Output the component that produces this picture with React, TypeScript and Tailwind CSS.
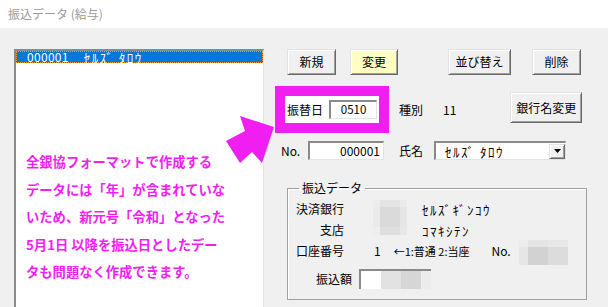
import React from 'react';

const font = "font-['Noto_Sans_CJK_JP',sans-serif]";

const Btn: React.FC<{ label: string; className?: string }> = ({ label, className = '' }) => (
  <div
    className={`flex items-center justify-center border border-t-[#e3e3e3] border-l-[#e3e3e3] border-r-[#696969] border-b-[#696969] shadow-[inset_1px_1px_0_#ffffff,inset_-1px_-1px_0_#a0a0a0] text-[12px] leading-none text-black ${className}`}
  >
    {label}
  </div>
);

const sunken =
  'border-t-2 border-l-2 border-r border-b border-t-[#8a8a8a] border-l-[#8a8a8a] border-r-[#e3e3e3] border-b-[#e3e3e3] bg-white';

// half-width katakana, spaced out the way the old Windows UI font draws them
const kana = 'text-[13px] tracking-[1.5px]';

export default function App() {
  return (
    <div className={`relative w-[608px] h-[307px] overflow-hidden bg-[#f0f0f0] text-black ${font}`}>
      {/* title bar */}
      <div className="h-[28px] bg-white flex items-center pl-[8px] text-[12px] text-[#9a9a9a]">
        振込データ (給与)
      </div>

      <div className="flex pt-[21px]">
        {/* list box */}
        <div className="ml-[14px] w-[250px] h-[270px] bg-white border-t-2 border-l-2 border-r border-t-[#8a8a8a] border-l-[#8a8a8a] border-r-[#e3e3e3] shrink-0">
          <div className="h-[12px] bg-[#0078d7] border border-dotted border-[#e89a3c] flex items-center pl-[10px] text-[12px] leading-none text-white whitespace-nowrap">
            <span className="tracking-[0.3px]">000001</span>
            <span className={`ml-[15px] ${kana}`}>ｾﾙｽﾞ ﾀﾛｳ</span>
          </div>
          <div className="mt-[85px] pl-[10px] text-[13.3px] leading-[27.5px] font-bold text-[#f01ef0] whitespace-nowrap">
            全銀協フォーマットで作成する
            <br />
            データには「年」が含まれていな
            <br />
            いため、新元号「令和」となった
            <br />
            5月1日 以降を振込日としたデー
            <br />
            タも問題なく作成できます。
          </div>
        </div>

        {/* right panel */}
        <div className="ml-[11px] flex flex-col text-[12px]">
          <div className="flex h-[26px]">
            <Btn label="新規" className="ml-[12px] w-[49px] bg-[#f0f0f0]" />
            <Btn label="変更" className="ml-[14px] w-[48px] bg-[#ffffc4]" />
            <Btn label="並び替え" className="ml-[50px] w-[63px] bg-[#f0f0f0]" />
            <Btn label="削除" className="ml-[21px] w-[49px] bg-[#f0f0f0]" />
          </div>

          <div className="mt-[11px] flex items-center">
            <div className="w-[114px] h-[47px] border-[10px] border-[#f01ef0] bg-white flex items-center">
              <span className="pl-[2px] leading-none">振替日</span>
              <div className={`ml-[6px] w-[48px] h-[19px] flex items-center justify-center leading-none text-[11.5px] ${sunken}`}>
                0510
              </div>
            </div>
            <span className="ml-[10px] leading-none">種別</span>
            <span className="ml-[20px] leading-none">11</span>
            <Btn label="銀行名変更" className="ml-[54px] w-[72px] h-[31px] self-start mt-[6px] bg-[#f0f0f0]" />
          </div>

          <div className="mt-[8px] h-[19px] flex items-center">
            <span className="ml-[6px] w-[27px] leading-none">No.</span>
            <div className={`w-[76px] h-[19px] flex items-center justify-end pr-[3px] leading-none ${sunken}`}>
              000001
            </div>
            <span className="ml-[15px] leading-none">氏名</span>
            <div className={`ml-[11px] w-[132px] h-[19px] flex items-center justify-between leading-none ${sunken}`}>
              <span className={`pl-[9px] ${kana}`}>ｾﾙｽﾞ ﾀﾛｳ</span>
              <div className="w-[16px] h-[15px] bg-[#f0f0f0] border border-t-[#e3e3e3] border-l-[#e3e3e3] border-r-[#696969] border-b-[#696969] shadow-[inset_1px_1px_0_#ffffff,inset_-1px_-1px_0_#a0a0a0] flex items-center justify-center">
                <svg width="7" height="4" viewBox="0 0 7 4">
                  <polygon points="0,0 7,0 3.5,4" fill="#000" />
                </svg>
              </div>
            </div>
          </div>

          <fieldset className="mt-[20px] ml-[12px] w-[300px] h-[120px] border border-[#a0a0a0] shadow-[inset_1px_1px_0_#ffffff] pt-[2.5px]">
            <legend className="ml-[11px] px-[3px] text-[12px] leading-[16px]">振込データ</legend>

            <div className="h-[21px] flex items-center">
              <span className="ml-[8px] w-[48px] text-right leading-none">決済銀行</span>
              <div className="relative ml-[29px] w-[34px] h-[21px]">
                <div className="absolute left-0 top-[1.5px] grid grid-cols-[7px_20px_7px] grid-rows-[7px_20px_8px]">
                  <div className="bg-[#ededed]" />
                  <div className="bg-[#e4e4e4]" />
                  <div className="bg-[#ebebeb]" />
                  <div className="bg-[#eaeaea]" />
                  <div className="bg-[#dadada]" />
                  <div className="bg-[#e6e6e6]" />
                  <div className="bg-[#eeeeee]" />
                  <div className="bg-[#dedede]" />
                  <div className="bg-[#e8e8e8]" />
                </div>
              </div>
              <span className={`ml-[15px] leading-none ${kana}`}>ｾﾙｽﾞｷﾞﾝｺｳ</span>
            </div>

            <div className="h-[21px] flex items-center">
              <span className="ml-[8px] w-[48px] text-right leading-none">支店</span>
              <span className={`ml-[78px] leading-none ${kana}`}>ｺﾏｷｼﾃﾝ</span>
            </div>

            <div className="h-[21px] flex items-center">
              <span className="ml-[8px] w-[48px] text-right leading-none">口座番号</span>
              <span className="ml-[30px] leading-none">1</span>
              <span className="ml-[13px] text-[11px] leading-none">←1:普通 2:当座</span>
              <span className="ml-[22px] leading-none">No.</span>
              <div className="relative ml-[8px] w-[49px] h-[21px]">
                <div className="absolute left-0 -top-[0.5px] grid grid-cols-[9px_20px_20px] grid-rows-[7px_18px]">
                  <div className="bg-[#ececec]" />
                  <div className="bg-[#e4e4e4]" />
                  <div className="bg-[#e8e8e8]" />
                  <div className="bg-[#e6e6e6]" />
                  <div className="bg-[#d2d2d2]" />
                  <div className="bg-[#dcdcdc]" />
                </div>
              </div>
            </div>

            <div className="mt-[6.5px] h-[21px] flex items-center">
              <span className="ml-[8px] w-[56px] text-right leading-none">振込額</span>
              <div className="ml-[7px] w-[72px] h-[20px] flex border-t-2 border-l-2 border-t-[#8a8a8a] border-l-[#8a8a8a]">
                <div className="w-[20px] bg-white" />
                <div className="w-[20px] bg-[#e2e2e2]" />
                <div className="w-[20px] bg-[#d6d6d6]" />
                <div className="flex-1 bg-[#ececec]" />
              </div>
            </div>
          </fieldset>
        </div>
      </div>

      {/* annotation arrow */}
      <svg className="absolute left-0 top-0 pointer-events-none" width="608" height="307" viewBox="0 0 608 307">
        <polygon points="240,116 274,127 262,163 252,152 240,163 226,141 245,131" fill="#f01ef0" />
      </svg>
    </div>
  );
}
